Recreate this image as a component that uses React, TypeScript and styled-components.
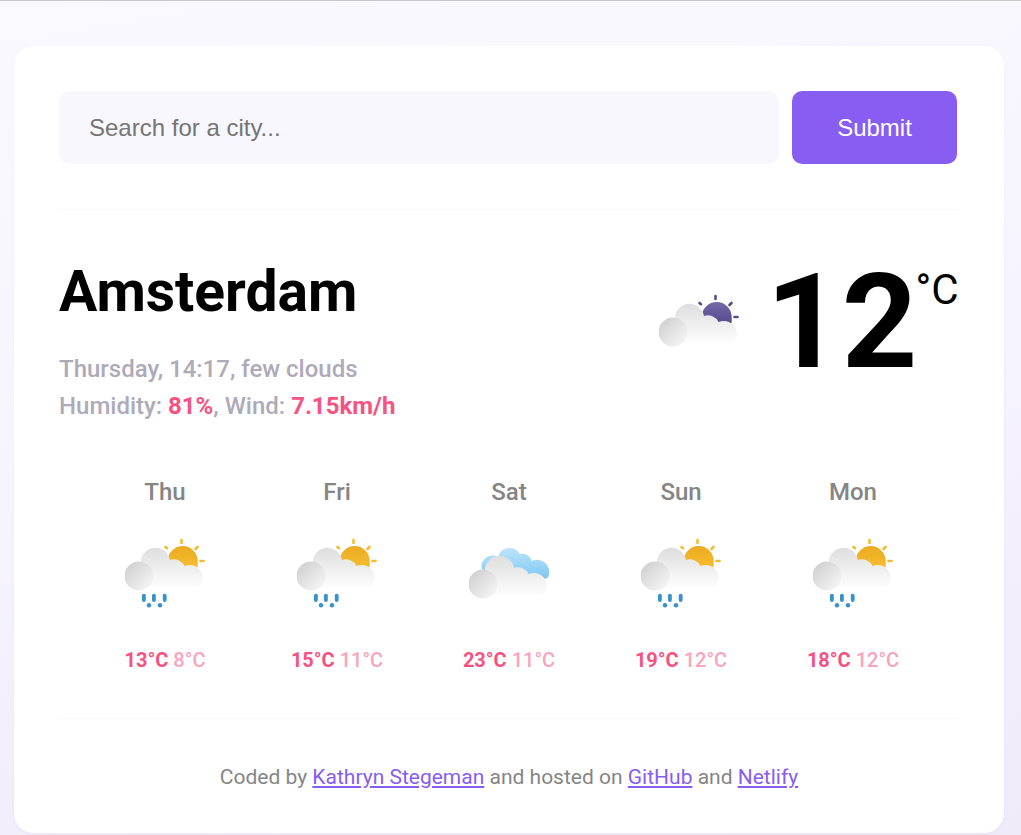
import React from 'react';
import styled, { createGlobalStyle } from 'styled-components';

type Forecast = {
  day: string;
  high: number;
  low: number;
  kind: 'rain' | 'clouds';
};

const forecast: Forecast[] = [
  { day: 'Thu', high: 13, low: 8, kind: 'rain' },
  { day: 'Fri', high: 15, low: 11, kind: 'rain' },
  { day: 'Sat', high: 23, low: 11, kind: 'clouds' },
  { day: 'Sun', high: 19, low: 12, kind: 'rain' },
  { day: 'Mon', high: 18, low: 12, kind: 'rain' },
];

const GlobalStyle = createGlobalStyle`
  html, body {
    margin: 0;
    padding: 0;
  }
  body {
    height: 835px;
    overflow: hidden;
    box-sizing: border-box;
    border-top: 1px solid #c9c9cc;
    background: linear-gradient(170deg, #faf9ff 0%, #f6f4fe 50%, #efebf9 100%);
    font-family: Roboto, sans-serif;
  }
`;

const Page = styled.main`
  padding: 45px 17px 0 14px;
`;
const Card = styled.div`
  height: 787px;
  box-sizing: border-box;
  padding: 45px 45px 0;
  background: #fff;
  border-radius: 20px;
  box-shadow: 0 2px 4px rgba(120, 100, 200, 0.05);
`;
const SearchForm = styled.form`
  display: flex;
  gap: 13px;
  width: 898px;
`;
const SearchInput = styled.input`
  flex: 1;
  height: 73px;
  box-sizing: border-box;
  padding: 0 30px;
  border: none;
  border-radius: 10px;
  background: #f8f7fe;
  font-family: 'Liberation Sans', Arial, sans-serif;
  font-size: 24px;
  &::placeholder {
    color: #757575;
    opacity: 1;
  }
`;
const SubmitButton = styled.button`
  width: 165px;
  height: 73px;
  border: none;
  border-radius: 10px;
  background: #885df1;
  color: #fff;
  font-family: 'Liberation Sans', Arial, sans-serif;
  font-size: 24px;
`;
const Divider = styled.hr<{ $top: number }>`
  margin: ${(p) => p.$top}px 0 0;
  border: none;
  border-top: 1px solid #f9f7fe;
`;
const Current = styled.section`
  display: flex;
  justify-content: space-between;
  height: 268px;
`;
const Place = styled.div`
  padding-top: 48px;
`;
const City = styled.h1`
  margin: 0;
  font-size: 57px;
  line-height: 68px;
  font-weight: 700;
  color: #000;
`;
const Details = styled.p`
  margin: 25px 0 0;
  font-size: 24px;
  line-height: 37px;
  font-weight: 500;
  color: #aeaaba;
  strong {
    font-weight: 700;
    color: #f65282;
  }
`;
const Now = styled.div`
  display: flex;
  align-items: flex-start;
  width: 300px;
`;
const NowIcon = styled.div`
  margin-top: 82px;
  margin-right: 27px;
  line-height: 0;
`;
const Temperature = styled.div`
  font-size: 132px;
  line-height: 155px;
  font-weight: 700;
  margin-top: 35px;
  color: #000;
`;
const Unit = styled.span`
  font-size: 42px;
  line-height: 47px;
  margin-top: 56px;
  margin-left: -2px;
  color: #000;
`;
const Days = styled.section`
  display: grid;
  grid-template-columns: repeat(5, 172px);
  padding: 0 20px;
`;
const Day = styled.div`
  display: flex;
  flex-direction: column;
  align-items: center;
`;
const DayName = styled.div`
  font-size: 24px;
  line-height: 28px;
  font-weight: 500;
  color: #858585;
`;
const DayIcon = styled.div`
  margin-top: 30px;
  line-height: 0;
`;
const Range = styled.div`
  margin-top: 32px;
  font-size: 20px;
  line-height: 24px;
  font-weight: 700;
  color: #f65282;
  span {
    font-weight: 500;
    color: #fba3bd;
  }
`;
const Footer = styled.footer`
  margin-top: 46px;
  text-align: center;
  font-size: 21px;
  line-height: 24px;
  color: #858585;
  a {
    color: #885df1;
  }
`;

type IconProps = {
  sun?: string;
  sunTop?: string;
  rain?: boolean;
  blue?: boolean;
  id: string;
};

const WeatherIcon = ({ sun, sunTop, rain, blue, id }: IconProps) => (
  <svg width={80} height={80} viewBox='0 0 80 80'>
    <defs>
      <linearGradient id={`${id}-ball`} x1='0' y1='0' x2='1' y2='1'>
        <stop offset='0%' stopColor='#cbcbcb' />
        <stop offset='100%' stopColor='#fafafa' />
      </linearGradient>
      <linearGradient id={`${id}-cloud`} x1='0' y1='0' x2='0' y2='1'>
        <stop offset='0%' stopColor='#dedede' />
        <stop offset='100%' stopColor='#ffffff' />
      </linearGradient>
      <linearGradient id={`${id}-sun`} x1='0' y1='0' x2='0' y2='1'>
        <stop offset='0%' stopColor={sunTop} />
        <stop offset='100%' stopColor={sun} />
      </linearGradient>
      <linearGradient id={`${id}-sky`} x1='0' y1='0' x2='0' y2='1'>
        <stop offset='0%' stopColor='#bce4fb' />
        <stop offset='100%' stopColor='#74c2f2' />
      </linearGradient>
    </defs>
    {sun && (
      <g>
        <path d='M42.7 25a15 15 0 0 1 30 0v6H42.7z' fill={`url(#${id}-sun)`} />
        <g stroke={sun} strokeWidth={2.6} strokeLinecap='round'>
          <line x1='56.5' y1='4' x2='56.5' y2='7' />
          <line x1='40.5' y1='11' x2='42' y2='12.2' />
          <line x1='72.5' y1='11' x2='70.5' y2='13' />
          <line x1='75.5' y1='25' x2='78.5' y2='25' />
        </g>
      </g>
    )}
    {blue && (
      <path
        d='M14 36A11 11 0 0 1 29 21A12 12 0 0 1 51 18A10 10 0 0 1 63 25A12 12 0 0 1 78.5 42L60 48z'
        fill={`url(#${id}-sky)`}
      />
    )}
    <g transform={blue ? 'translate(0 8)' : undefined}>
      <path
        d='M18 53H68A11 11 0 0 0 77.7 43A13 13 0 0 0 59.5 30A12 12 0 0 0 45 24A14.7 14.7 0 0 0 16 29L14 53z'
        fill={`url(#${id}-cloud)`}
      />
      <circle cx={14} cy={40} r={14.5} fill={`url(#${id}-ball)`} />
    </g>
    {rain && (
      <g fill='#3592cd'>
        <rect x={17} y={57.7} width={3.8} height={8.3} rx={1.9} />
        <rect x={27} y={57.7} width={3.8} height={8.3} rx={1.9} />
        <rect x={37.8} y={57.7} width={3.8} height={8.3} rx={1.9} />
        <circle cx={24} cy={69.3} r={2.2} />
        <circle cx={35} cy={69.3} r={2.2} />
      </g>
    )}
  </svg>
);

const App = () => (
  <Page>
    <GlobalStyle />
    <Card>
      <SearchForm onSubmit={(e) => e.preventDefault()}>
        <SearchInput type='search' placeholder='Search for a city...' />
        <SubmitButton type='submit'>Submit</SubmitButton>
      </SearchForm>
      <Divider $top={45} />
      <Current>
        <Place>
          <City>Amsterdam</City>
          <Details>
            Thursday, 14:17, few clouds
            <br />
            Humidity: <strong>81%</strong>, Wind: <strong>7.15km/h</strong>
          </Details>
        </Place>
        <Now>
          <NowIcon>
            <WeatherIcon id='now' sun='#574a90' sunTop='#7468a6' />
          </NowIcon>
          <Temperature>12</Temperature>
          <Unit>°C</Unit>
        </Now>
      </Current>
      <Days>
        {forecast.map((item) => (
          <Day key={item.day}>
            <DayName>{item.day}</DayName>
            <DayIcon>
              {item.kind === 'rain' ? (
                <WeatherIcon id={item.day} sun='#f5bd2e' sunTop='#ecaa22' rain />
              ) : (
                <WeatherIcon id={item.day} blue />
              )}
            </DayIcon>
            <Range>
              {item.high}°C <span>{item.low}°C</span>
            </Range>
          </Day>
        ))}
      </Days>
      <Divider $top={46} />
      <Footer>
        Coded by <a href='#kathryn'>Kathryn Stegeman</a> and hosted on{' '}
        <a href='#github'>GitHub</a> and <a href='#netlify'>Netlify</a>
      </Footer>
    </Card>
  </Page>
);

export default App;
